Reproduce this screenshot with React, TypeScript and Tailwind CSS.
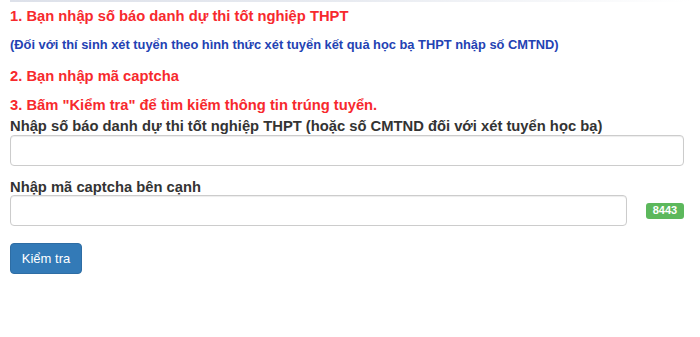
const App = () => {
  return (
    <div className="min-h-[337px] w-[700px] bg-white font-['Liberation_Sans',Arial,sans-serif]">
      <div className="ml-[10px] h-[2px] w-[680px] bg-gradient-to-r from-[#dde1ea] via-[#e8ebf1] to-white" />
      <div className="pl-[10px] pr-[16px]">
        <div className="mt-[3px] text-[14.75px] font-bold leading-[22px] text-[#f7292d]">
          1. Bạn nhập số báo danh dự thi tốt nghiệp THPT
        </div>
        <div className="mt-[9px] text-[12.85px] font-bold leading-[18px] text-[#2342b3]">
          (Đối với thí sinh xét tuyển theo hình thức xét tuyển kết quả học bạ THPT nhập số CMTND)
        </div>
        <div className="mt-[11px] text-[14.75px] font-bold leading-[22px] text-[#f7292d]">
          2. Bạn nhập mã captcha
        </div>
        <div className="mt-[7px] text-[14.75px] font-bold leading-[22px] text-[#f7292d]">
          3. Bấm "Kiểm tra" để tìm kiếm thông tin trúng tuyển.
        </div>

        <label className="mt-[2px] block text-[14.75px] font-bold leading-[17px] text-[#333]">
          Nhập số báo danh dự thi tốt nghiệp THPT (hoặc số CMTND đối với xét tuyển học bạ)
        </label>
        <input
          type="text"
          className="block h-[31px] w-full rounded-[4px] border border-[#ccc] bg-white px-3 text-[14px] text-[#555] shadow-[inset_0_1px_1px_rgba(0,0,0,0.075)] outline-none"
        />

        <label className="mt-[13px] block text-[14.75px] font-bold leading-[16px] text-[#333]">
          Nhập mã captcha bên cạnh
        </label>
        <div className="flex items-center">
          <input
            type="text"
            className="block h-[31px] w-[617px] rounded-[4px] border border-[#ccc] bg-white px-3 text-[14px] text-[#555] shadow-[inset_0_1px_1px_rgba(0,0,0,0.075)] outline-none"
          />
          <span className="ml-[19px] flex h-[16px] w-[38px] items-center justify-center rounded-[3px] bg-[#5cb85c] text-[11px] font-bold leading-none text-white">
            8443
          </span>
        </div>

        <button
          type="button"
          className="mt-[17px] h-[31px] w-[72px] rounded-[4px] border border-[#2e6da4] bg-[#337ab7] text-[13px] leading-none text-white"
        >
          Kiểm tra
        </button>
      </div>
    </div>
  );
};

export default App;
